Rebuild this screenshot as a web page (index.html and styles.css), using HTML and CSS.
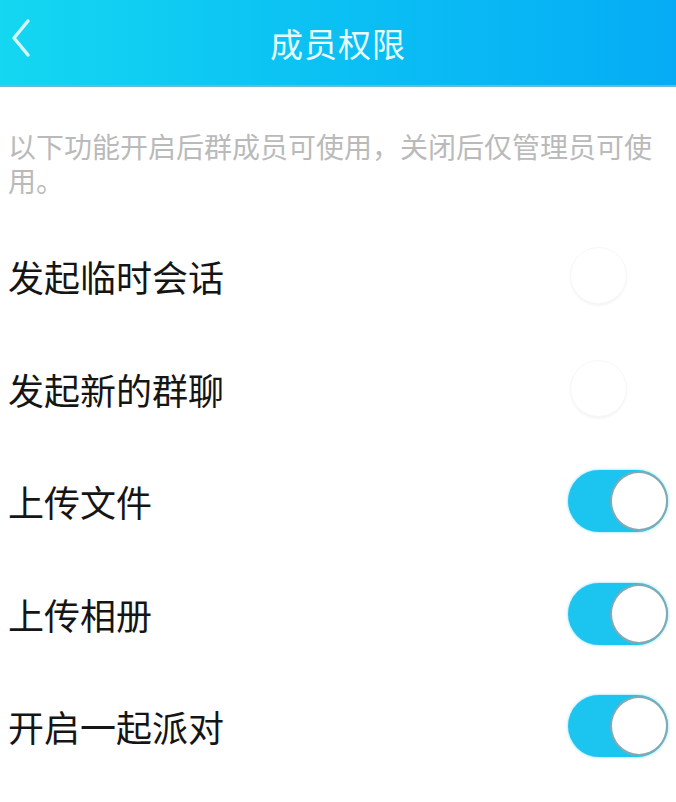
FILE: index.html
```html
<!DOCTYPE html>
<html lang="zh-CN">
<head>
  <meta charset="UTF-8" />
  <meta name="viewport" content="width=device-width, initial-scale=1" />
  <title>成员权限</title>
  <link rel="stylesheet" href="styles.css">
</head>
<body>
  <header class="topbar">
    <a class="back" href="#">
      <svg width="24" height="40" viewBox="0 0 24 40">
        <path d="M19 3 L5 20 L19 37" fill="none" stroke="#d6f6fd" stroke-width="3.5" stroke-linecap="round" stroke-linejoin="round"/>
      </svg>
    </a>
    <h1>成员权限</h1>
  </header>

  <main class="content">
    <p class="hint">以下功能开启后群成员可使用，关闭后仅管理员可使用。</p>

    <div class="row">
      <span>发起临时会话</span>
      <span class="switch"></span>
    </div>
    <div class="row">
      <span>发起新的群聊</span>
      <span class="switch"></span>
    </div>
    <div class="row">
      <span>上传文件</span>
      <span class="switch on"></span>
    </div>
    <div class="row">
      <span>上传相册</span>
      <span class="switch on"></span>
    </div>
    <div class="row">
      <span>开启一起派对</span>
      <span class="switch on"></span>
    </div>
  </main>
</body>
</html>
```

FILE: styles.css
```css
body {
  margin: 0;
  background: #fff;
  font-family: "Noto Sans CJK SC", "Noto Sans", sans-serif;
  color: #151515;
}

.topbar {
  position: relative;
  height: 85px;
  background: linear-gradient(90deg, #14d7f1 0%, #0cc4f3 40%, #05acf5 100%);
  border-bottom: 2px solid #6ab9d4;
  display: flex;
  align-items: center;
  justify-content: center;
}
.topbar h1 {
  margin: 0;
  font-size: 33px;
  font-weight: 400;
  color: #e8fbff;
  letter-spacing: 1px;
}
.back {
  position: absolute;
  left: 9px;
  top: 18px;
  display: block;
}

.content { padding: 0 8px; }

.hint {
  margin: 0;
  padding: 42px 0 23px;
  font-size: 28px;
  line-height: 34px;
  color: #bababa;
}

.row {
  height: 112.5px;
  display: flex;
  align-items: center;
  justify-content: space-between;
  font-size: 36px;
}

.switch {
  position: relative;
  width: 100px;
  height: 62px;
  border-radius: 31px;
  background: #fff;
}
.switch::after {
  content: "";
  position: absolute;
  left: 2px;
  top: 2px;
  width: 57px;
  height: 57px;
  border-radius: 50%;
  background: #fff;
  box-shadow: 0 2px 2px rgba(0, 0, 0, 0.04);
  border: 1px solid #f7f7f7;
  box-sizing: border-box;
}
.switch.on {
  background: #1bc5f0;
  box-shadow: 0 0 3px rgba(27, 197, 240, 0.6);
}
.switch.on::after {
  left: auto;
  right: 0;
  top: 1px;
  width: 58px;
  height: 60px;
  border: 2px solid #84a9b2;
  box-shadow: none;
}
```
